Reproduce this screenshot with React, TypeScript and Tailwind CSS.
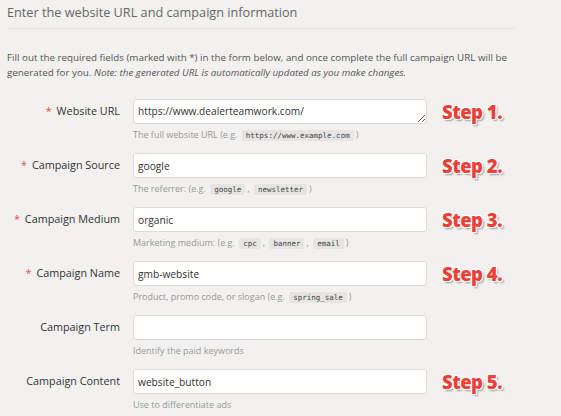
import React from "react"

type Field = {
  label: string
  required: boolean
  value: string
  step?: string
  textarea?: boolean
  help: React.ReactNode
}

function Code({ children }: { children: React.ReactNode }) {
  return (
    <code className="mx-[2px] rounded-[2px] bg-[#e6e5e4] px-[4px] py-[1px] font-['DejaVu_Sans_Mono',monospace] text-[7.5px] text-[#444]">
      {children}
    </code>
  )
}

const fields: Field[] = [
  {
    label: "Website URL",
    required: true,
    value: "https://www.dealerteamwork.com/",
    step: "Step 1.",
    textarea: true,
    help: (
      <>
        The full website URL (e.g. <Code>https://www.example.com</Code>)
      </>
    ),
  },
  {
    label: "Campaign Source",
    required: true,
    value: "google",
    step: "Step 2.",
    help: (
      <>
        The referrer: (e.g. <Code>google</Code>, <Code>newsletter</Code>)
      </>
    ),
  },
  {
    label: "Campaign Medium",
    required: true,
    value: "organic",
    step: "Step 3.",
    help: (
      <>
        Marketing medium: (e.g. <Code>cpc</Code>, <Code>banner</Code>, <Code>email</Code>)
      </>
    ),
  },
  {
    label: "Campaign Name",
    required: true,
    value: "gmb-website",
    step: "Step 4.",
    help: (
      <>
        Product, promo code, or slogan (e.g. <Code>spring_sale</Code>)
      </>
    ),
  },
  {
    label: "Campaign Term",
    required: false,
    value: "",
    help: <>Identify the paid keywords</>,
  },
  {
    label: "Campaign Content",
    required: false,
    value: "website_button",
    step: "Step 5.",
    help: <>Use to differentiate ads</>,
  },
]

export default function App() {
  return (
    <div className="h-[416px] w-[561px] overflow-hidden bg-[#f2f1f0] px-[7px] font-['Open_Sans',sans-serif]">
      <div className="w-[508px] border-b border-[#e2e1e0] pt-[2px] pb-[6px]">
        <h2 className="text-[12.7px] leading-[20px] text-[#666]">
          Enter the website URL and campaign information
        </h2>
      </div>

      <p className="mt-[21px] whitespace-nowrap text-[9.8px] leading-[15px] text-[#555]">
        Fill out the required fields (marked with *) in the form below, and once complete the full campaign URL will be
        <br />
        generated for you. <em>Note: the generated URL is automatically updated as you make changes.</em>
      </p>

      <div className="mt-[19px] flex flex-col">
        {fields.map((f) => (
          <div key={f.label} className="flex h-[54px] items-start">
            <label className="flex h-[25px] w-[113px] shrink-0 items-center justify-end whitespace-nowrap text-[10.8px] text-[#333]">
              {f.required && <span className="mr-[5px] text-[#d9534f]">*</span>}
              {f.label}
            </label>
            <div className="ml-[13px] flex w-[294px] flex-col">
              {f.textarea ? (
                <textarea
                  readOnly
                  rows={1}
                  value={f.value}
                  className="block h-[25px] w-full resize-y overflow-hidden rounded-[3px] border border-[#dddcdb] bg-white px-[4px] py-[4px] text-[10.2px] leading-[15px] text-[#333] outline-none"
                />
              ) : (
                <input
                  readOnly
                  value={f.value}
                  className="block h-[25px] w-full rounded-[3px] border border-[#dddcdb] bg-white px-[4px] text-[10.2px] text-[#333] outline-none"
                />
              )}
              <div className="mt-[4px] whitespace-nowrap text-[9px] leading-[14px] text-[#999]">{f.help}</div>
            </div>
            {f.step && (
              <div className="ml-[15px] flex h-[25px] items-center text-[18.5px] font-extrabold tracking-[-0.5px] text-[#e8423a] [text-shadow:1px_1px_0_#fff,-1px_-1px_0_#fff,1px_-1px_0_#fff,-1px_1px_0_#fff,2px_2px_2px_rgba(0,0,0,0.35)]">
                {f.step}
              </div>
            )}
          </div>
        ))}
      </div>
    </div>
  )
}
